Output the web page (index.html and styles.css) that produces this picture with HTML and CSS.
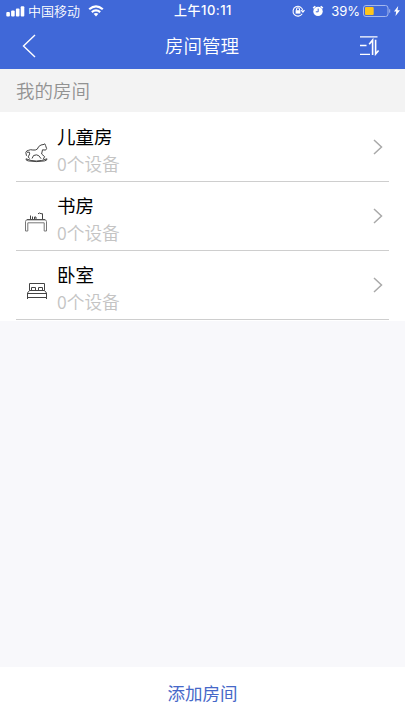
FILE: index.html
```html
<!DOCTYPE html>
<html lang="zh-CN">
<head>
<meta charset="utf-8">
<title>房间管理</title>
<link rel="stylesheet" href="styles.css">
</head>
<body>
<header class="header">
  <div class="status">
    <div class="status-left">
      <svg class="signal" width="19" height="11" viewBox="0 0 19 11" fill="currentColor"><rect x="0.3" y="6" width="3.6" height="4.5" rx="1"/><rect x="5.1" y="4.5" width="3.6" height="6" rx="1"/><rect x="9.9" y="2.5" width="3.6" height="8" rx="1"/><rect x="14.7" y="0.3" width="3.6" height="10.2" rx="1"/></svg>
      <span class="carrier">中国移动</span>
      <svg class="wifi" width="16" height="12" viewBox="0 0 16 12" fill="none" stroke="currentColor" stroke-width="2.2"><path d="M1.2 4.3Q8-1.7 14.8 4.3M3.8 7.1Q8 3.6 12.2 7.1"/><path d="M5.6 8.8Q8 7.1 10.4 8.8L8 11.4z" fill="currentColor" stroke="none"/></svg>
    </div>
    <span class="time">上午10:11</span>
    <div class="status-right">
      <svg class="lock" width="13" height="12" viewBox="0 0 13 12" fill="none" stroke="currentColor" stroke-width="1.1"><path d="M10.2 8.7A4.9 4.9 0 1 1 10.8 5.5M9 5.2l1.9 1.9 1.6-2"/><path d="M4.5 5.4V4.2a1.5 1.5 0 0 1 3 0v1.2"/><rect x="3.6" y="5.2" width="4.8" height="3.4" fill="currentColor" stroke="none"/></svg>
      <svg class="alarm" width="12" height="12" viewBox="0 0 12 12"><circle cx="6" cy="6.4" r="4.7" fill="currentColor"/><path d="M1.2 3.1 3.3 1.2M10.8 3.1 8.7 1.2" stroke="currentColor" stroke-width="1.5"/><path class="hands" d="M6.2 3.6v3.2H3.8" fill="none"/></svg>
      <span class="percent">39%</span>
      <svg class="battery" width="28" height="12" viewBox="0 0 28 12" fill="none"><rect class="shell" x="0.5" y="0.5" width="24.5" height="11" rx="2.5"/><rect class="charge" x="2" y="2" width="8.7" height="8" rx="1"/><path class="shell" d="M26.7 4.3v3.4"/></svg>
      <svg class="bolt" width="6" height="10" viewBox="0 0 6 10" fill="currentColor"><path d="M4.2 0 0 5.6h2.2L1.5 10 6 4.2H3.5z"/></svg>
    </div>
  </div>
  <nav class="nav">
    <svg class="back" width="14" height="24" viewBox="0 0 14 24" fill="none" stroke="currentColor" stroke-width="1.4"><path d="M13 1 1.5 12 13 23"/></svg>
    <h1 class="title">房间管理</h1>
    <svg class="sort" width="20" height="20" viewBox="0 0 20 20" fill="none" stroke="currentColor" stroke-width="1.3"><path d="M0 .8h17.5M0 9.5h6.5M0 18.4h10"/><path d="M9.2 8.2 12.6 4v15" stroke-width="1.6"/><path d="M15.6 3.8v14.2l3-3.6" stroke-width="1.6"/></svg>
  </nav>
</header>
<h2 class="section">我的房间</h2>
<main class="rooms">
  <a class="room">
    <svg class="icon" width="24" height="20" viewBox="0 0 24 20"><path d="M2 15.8q10 4.5 21 0M2 15.8q-.3 1.7 2.2 2.1 8.4 1.4 16.4 0 2.6-.5 2.4-2.1"/><path d="M2.5 12.8 1.8 9.5q.5-2 2.8-2.2 1.7-1 4.3-.3 2.5.5 4.4-.9 1-3.1 3.7-4.1L20 1.4l.8-.6.7 1.5 1.1 3.3-1 1.5-3.1-.3-.9 4.2 3 2.6-1.2 2.4M3 9.3q3.2-1.2 2.7 1.6l-1.5 3 1.4 1.7M8 15.5l1.6-3q3.1-1.4 5.2.2l2.3 3"/></svg>
    <div class="info"><span class="name">儿童房</span><span class="count">0个设备</span></div>
    <svg class="arrow" width="10" height="16" viewBox="0 0 10 16"><path d="m1 1 7.5 7L1 15"/></svg>
  </a>
  <a class="room">
    <svg class="icon" width="24" height="20" viewBox="0 0 24 20"><path class="soft" d="M1.5 19V9.7q0-2 2-2h17q2 0 2 2V19h-2.3v-8.2H3.8V19z"/><path d="M3 7.7h18M6.5 7V3.5M8.5 7V4.5M10.5 7V5h1.5v2M14 1.8l1.5-.8 1.5.7h1.5V7"/></svg>
    <div class="info"><span class="name">书房</span><span class="count">0个设备</span></div>
    <svg class="arrow" width="10" height="16" viewBox="0 0 10 16"><path d="m1 1 7.5 7L1 15"/></svg>
  </a>
  <a class="room">
    <svg class="icon" width="24" height="20" viewBox="0 0 24 20"><path d="M5.5 9.5V2.5h15v7M3.5 18v-6l2-2.5h15l2 2.5v6M3.5 12.5h19M3.5 16.5h19M7.5 9.5v-3h4v3M14.5 9.5v-3h4v3"/></svg>
    <div class="info"><span class="name">卧室</span><span class="count">0个设备</span></div>
    <svg class="arrow" width="10" height="16" viewBox="0 0 10 16"><path d="m1 1 7.5 7L1 15"/></svg>
  </a>
</main>
<footer class="add">添加房间</footer>
</body>
</html>
```
FILE: styles.css
```css
* { box-sizing: border-box; }
body {
  margin: 0;
  height: 721px;
  display: flex;
  flex-direction: column;
  overflow: hidden;
  background: #f8f8fb;
  font-family: "Liberation Sans", "Noto Sans CJK SC", sans-serif;
}
svg { display: block; flex: none; }
h1, h2 { margin: 0; font-weight: 400; }
.header { height: 69px; flex: none; background: #4068d8; color: #fff; }
.status {
  height: 22px;
  display: grid;
  grid-template-columns: 1fr auto 1fr;
  align-items: center;
  padding: 0 5px 0 6px;
  font-size: 13px;
  line-height: 20px;
}
.status-left, .status-right { display: flex; align-items: center; height: 22px; }
.status-right { justify-content: flex-end; padding-bottom: 1px; }
.carrier { margin: 0 8px 1px 3px; font-family: "Noto Sans CJK SC", sans-serif; font-weight: 350; }
.time { margin-bottom: 2px; font-family: Inter, "Noto Sans CJK SC", sans-serif; font-weight: 500; letter-spacing: 0.5px; }
.lock { margin-right: 7px; }
.alarm { margin-right: 7px; }
.hands { stroke: #4068d8; }
.percent { font-family: Inter, sans-serif; font-weight: 400; margin-right: 3px; }
.shell { stroke: #a5b8ed; }
.charge { fill: #ffc51b; }
.bolt { margin-left: 3px; }
.nav {
  height: 47px;
  display: grid;
  grid-template-columns: 1fr auto 1fr;
  align-items: center;
  padding: 0 25px 0 22px;
}
.title { padding-left: 2px; font-size: 18.5px; line-height: 47px; font-family: "Noto Sans CJK SC", sans-serif; font-weight: 350; }
.sort { justify-self: end; }
.section {
  height: 43px;
  flex: none;
  padding-left: 16px;
  background: #f3f3f3;
  color: #929292;
  font: 350 18.5px/42px "Noto Sans CJK SC", sans-serif;
}
.rooms { background: #fff; padding: 1px 16px; flex: none; }
.room { display: flex; align-items: center; height: 69px; border-bottom: 1px solid #cecece; }
.icon { margin: 11px 0 0 8px; fill: none; stroke: #444; stroke-width: 1; }
.soft { stroke: #777; }
.info { display: flex; flex-direction: column; margin-left: 9px; flex: 1; padding-top: 4px; }
.name { font: 400 18.5px/28px "Noto Sans CJK SC", sans-serif; color: #000; }
.count { font: 350 17.7px/26px "Noto Sans CJK SC", sans-serif; color: #c4c4c4; }
.arrow { margin-right: 6px; fill: none; stroke: #a9a9a9; stroke-width: 1.5; }
.add {
  height: 54px;
  flex: none;
  margin-top: auto;
  background: #fff;
  color: #4668c8;
  text-align: center;
  font-size: 17.5px;
  line-height: 55px;
}
```
